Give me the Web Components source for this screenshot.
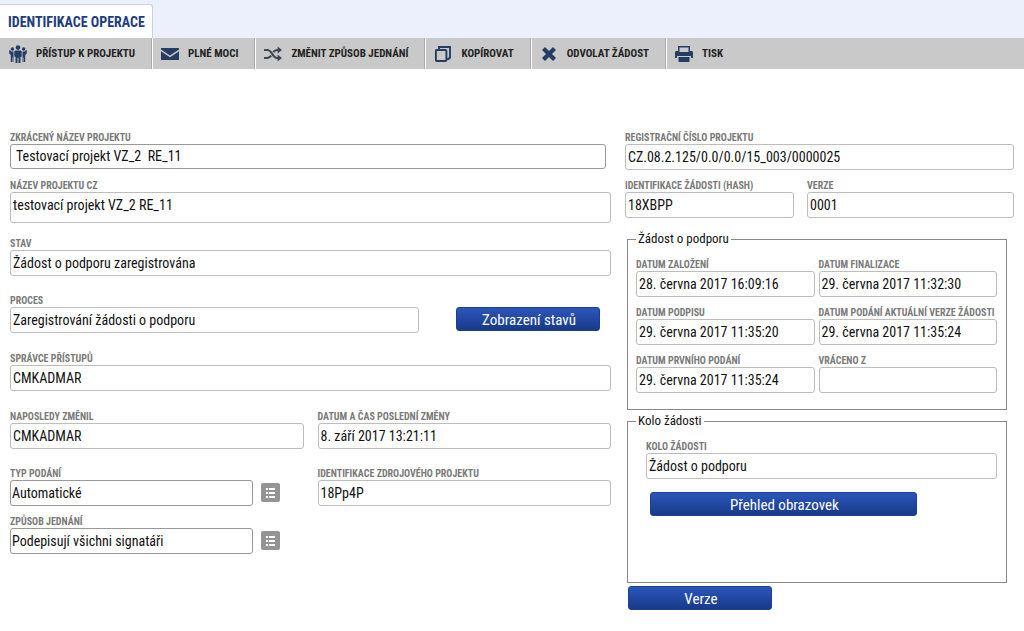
<!DOCTYPE html>
<html lang="cs">
<head>
<meta charset="utf-8">
<title>Identifikace operace</title>
<style>
html,body{margin:0;background:#fff}
body{font-family:"Roboto Condensed",Roboto,sans-serif;color:#111}
</style>
</head>
<body>
<operation-page></operation-page>
<script>
const define = (name, html, setup) => {
  const tpl = document.createElement('template');
  tpl.innerHTML = html;
  customElements.define(name, class extends HTMLElement {
    connectedCallback() {
      if (this.shadowRoot) return;
      this.attachShadow({mode: 'open'}).append(tpl.content.cloneNode(true));
      if (setup) setup(this, this.shadowRoot);
    }
  });
};

const ICONS = {
  people: `<g fill="#263d63"><circle cx="9" cy="2.600" r="2.300"/><circle cx="3.400" cy="4" r="1.700"/><circle cx="14.600" cy="4" r="1.700"/><path d="M6.200 5.600h5.600l.9 1v5.200h-1.200V18H9.500v-5.200h-1V18h-2v-6.200H5.300V6.600z"/><path d="M.2 5.200h1L2.400 6.400h2.100V17H3.700v-4.500h-.5V17H1.800v-7L.2 8.500zM17.800 5.200h-1l-1.200 1.200h-2.100V17h.8v-4.500h.5V17h1.400v-7l1.600-1.500z"/></g>`,
  mail: `<path fill="#263d63" d="M0 3h18v1.500L9 10.500 0 4.500zM0 6.300l9 6 9-6V15H0z"/>`,
  shuffle: `<g fill="none" stroke="#3c4654" stroke-width="2.200"><path d="M0 5h3.500c4.500 0 5 8 9.500 8h2M0 13h3.500c1.600 0 2.700-1 3.600-2.300M9.300 7.100C10.200 5.800 11.300 5 13 5h2"/></g><path fill="#3c4654" d="M13.600 1.500 18 5l-4.400 3.500zM13.600 9.500 18 13l-4.400 3.500z"/>`,
  copy: `<g fill="none" stroke="#263d63" stroke-width="1.900"><rect x="1.900" y="5" width="10.500" height="11" rx="1"/><path d="M5 4.500V2h11v10.500L14.500 14H13"/></g>`,
  cross: `<path fill="#263d63" d="M2 5 5 2l4 4 4-4 3 3-4 4 4 4-3 3-4-4-4 4-3-3 4-4z"/>`,
  print: `<path fill="#263d63" fill-rule="evenodd" d="M3 1h12v5h2l1 1v6h-2v-2H2v2H0V7l1-1h2zM4.500 2.500V7h9V2.500z"/><path fill="#263d63" d="M3.500 12h11v5h-11z"/>`
};

define('tool-button', `<style>
:host{display:block;border-right:1px solid #aaa;box-shadow:1px 0 #fff}
:host(:last-of-type){border:0;box-shadow:none}
button{display:flex;align-items:center;gap:9px;height:31px;margin:0;padding:0 16px 0 9px;border:0;background:none;color:#222;font:bold 11px/16px "Roboto Condensed",Roboto,sans-serif;white-space:nowrap;cursor:pointer}
svg{width:18px;height:18px;flex:none}
</style><button type="button"><svg viewBox="0 0 18 18" aria-hidden="true"></svg><slot></slot></button>`,
  (el, r) => { r.querySelector('svg').innerHTML = ICONS[el.getAttribute('icon')]; });

define('form-field', `<style>
:host{display:block;min-width:0}
label{display:block;height:13px;font-size:10px;line-height:13px;font-weight:bold;color:#7a7a7a;white-space:nowrap}
input{display:block;box-sizing:border-box;width:100%;height:26px;margin:0;padding:0 2px;border:1px solid #bdbdbd;border-radius:3px;background:#fff;color:#111;font:14px/18px "Roboto Condensed",Roboto,sans-serif;outline:0}
:host([tall]) input{height:31px;padding-bottom:5px}
:host([editable]) input{border-color:#999;padding-left:1px}
:host([indent]) input{height:25px;padding:0 2px 1px 5px}
</style><label for="f"></label><input id="f" type="text">`,
  (el, r) => {
    r.querySelector('label').textContent = el.getAttribute('label');
    const input = r.querySelector('input');
    input.value = el.getAttribute('value') || '';
    input.readOnly = !el.hasAttribute('editable');
  });

define('blue-button', `<style>
:host{display:block}
button{display:block;width:100%;height:24px;margin:0;padding:2px 0 0 2px;border:1px solid #1c3f93;border-radius:3px;background:linear-gradient(#2b56bb,#183a87);color:#fff;font:15px/20px "Roboto Condensed",Roboto,sans-serif;cursor:pointer}
</style><button type="button"><slot></slot></button>`);

define('list-button', `<style>
:host{display:block}
button{display:block;width:19px;height:19px;margin:0;padding:0;border:0;border-radius:2px;background:#949494;cursor:pointer}
svg{display:block}
</style><button type="button" aria-label="Vybrat ze seznamu"><svg width="19" height="19" viewBox="0 0 19 19" fill="#fff" aria-hidden="true"><path d="M5 5h2v2H5zM8 5h6v2H8zM5 9h2v2H5zM8 9h6v2H8zM5 13h2v2H5zM8 13h6v2H8z"/></svg></button>`);

define('field-group', `<style>
:host{display:block}
fieldset{margin:0;min-width:0;padding:11px 9px 16px 8px;border:1px solid #888}
:host([spacious]) fieldset{padding-bottom:66px}
:host([spacious]) div{padding-left:10px}
legend{padding:0 2px;font-size:13px;line-height:16px;color:#111}
</style><fieldset><legend></legend><div><slot></slot></div></fieldset>`,
  (el, r) => { r.querySelector('legend').textContent = el.getAttribute('legend'); });

define('operation-page', `<style>
:host{display:block}
header{background:#ecf0fd;padding-top:4px}
.tab{display:inline-block;vertical-align:top;box-sizing:border-box;height:34px;padding:0 7px 0 8px;background:#fff;border:1px solid #cdd0d8;border-left:0;border-bottom:0;border-radius:0 3px 0 0;color:#1f3d80;font-weight:bold;font-size:14px;line-height:34px;text-decoration:none}
nav{display:flex;background:#c9c9c9;height:31px}
main{display:grid;grid-template-columns:601fr 389fr;gap:14px;padding:62px 10px 20px;align-items:start}
.row{display:grid;align-items:end}
.left .row{margin-bottom:19px}
.left .near{margin-bottom:9px}
.left .first{margin-bottom:10px;padding-right:5px}
.left .mid{margin-bottom:14px}
.left .less{margin-bottom:18px}
.proc{grid-template-columns:409fr 144fr;column-gap:37px;padding-right:11px}
.proc blue-button{margin-bottom:2px}
.half{grid-template-columns:1fr 1fr;column-gap:14px}
.pick{display:grid;grid-template-columns:1fr 19px;column-gap:8px;align-items:end;padding-right:24px}
list-button{margin-bottom:4px}
.hash{grid-template-columns:169fr 207fr;column-gap:13px;margin:9px 0 13px}
field-group{margin:0 7px 3px 2px}
.dates{display:grid;grid-template-columns:1fr 1fr;gap:9px 4px}
.overview{width:76%;margin:13px 0 0 4px}
.version{width:37%;margin:0 0 0 3px}
</style>
<header><a class="tab" href="#operace">IDENTIFIKACE OPERACE</a></header>
<nav aria-label="Akce">
<tool-button icon="people">PŘÍSTUP K PROJEKTU</tool-button>
<tool-button icon="mail">PLNÉ MOCI</tool-button>
<tool-button icon="shuffle">ZMĚNIT ZPŮSOB JEDNÁNÍ</tool-button>
<tool-button icon="copy">KOPÍROVAT</tool-button>
<tool-button icon="cross">ODVOLAT ŽÁDOST</tool-button>
<tool-button icon="print">TISK</tool-button>
</nav>
<main id="operace">
<section class="left">
<div class="row first"><form-field editable indent label="ZKRÁCENÝ NÁZEV PROJEKTU" value="Testovací projekt VZ_2  RE_11"></form-field></div>
<div class="row mid"><form-field tall label="NÁZEV PROJEKTU CZ" value="testovací projekt VZ_2 RE_11"></form-field></div>
<div class="row less"><form-field label="STAV" value="Žádost o podporu zaregistrována"></form-field></div>
<div class="row proc"><form-field label="PROCES" value="Zaregistrování žádosti o podporu"></form-field><blue-button>Zobrazení stavů</blue-button></div>
<div class="row"><form-field label="SPRÁVCE PŘÍSTUPŮ" value="CMKADMAR"></form-field></div>
<div class="row less half"><form-field label="NAPOSLEDY ZMĚNIL" value="CMKADMAR"></form-field><form-field label="DATUM A ČAS POSLEDNÍ ZMĚNY" value="8. září 2017 13:21:11"></form-field></div>
<div class="row near half"><div class="pick"><form-field editable label="TYP PODÁNÍ" value="Automatické"></form-field><list-button></list-button></div><form-field label="IDENTIFIKACE ZDROJOVÉHO PROJEKTU" value="18Pp4P"></form-field></div>
<div class="row half"><div class="pick"><form-field editable label="ZPŮSOB JEDNÁNÍ" value="Podepisují všichni signatáři"></form-field><list-button></list-button></div></div>
</section>
<section>
<form-field label="REGISTRAČNÍ ČÍSLO PROJEKTU" value="CZ.08.2.125/0.0/0.0/15_003/0000025"></form-field>
<div class="row hash"><form-field label="IDENTIFIKACE ŽÁDOSTI (HASH)" value="18XBPP"></form-field><form-field label="VERZE" value="0001"></form-field></div>
<field-group legend="Žádost o podporu"><div class="dates">
<form-field label="DATUM ZALOŽENÍ" value="28. června 2017 16:09:16"></form-field>
<form-field label="DATUM FINALIZACE" value="29. června 2017 11:32:30"></form-field>
<form-field label="DATUM PODPISU" value="29. června 2017 11:35:20"></form-field>
<form-field label="DATUM PODÁNÍ AKTUÁLNÍ VERZE ŽÁDOSTI" value="29. června 2017 11:35:24"></form-field>
<form-field label="DATUM PRVNÍHO PODÁNÍ" value="29. června 2017 11:35:24"></form-field>
<form-field label="VRÁCENO Z"></form-field>
</div></field-group>
<field-group spacious legend="Kolo žádosti"><form-field label="KOLO ŽÁDOSTI" value="Žádost o podporu"></form-field><blue-button class="overview">Přehled obrazovek</blue-button></field-group>
<blue-button class="version">Verze</blue-button>
</section>
</main>`);
</script>
</body>
</html>
